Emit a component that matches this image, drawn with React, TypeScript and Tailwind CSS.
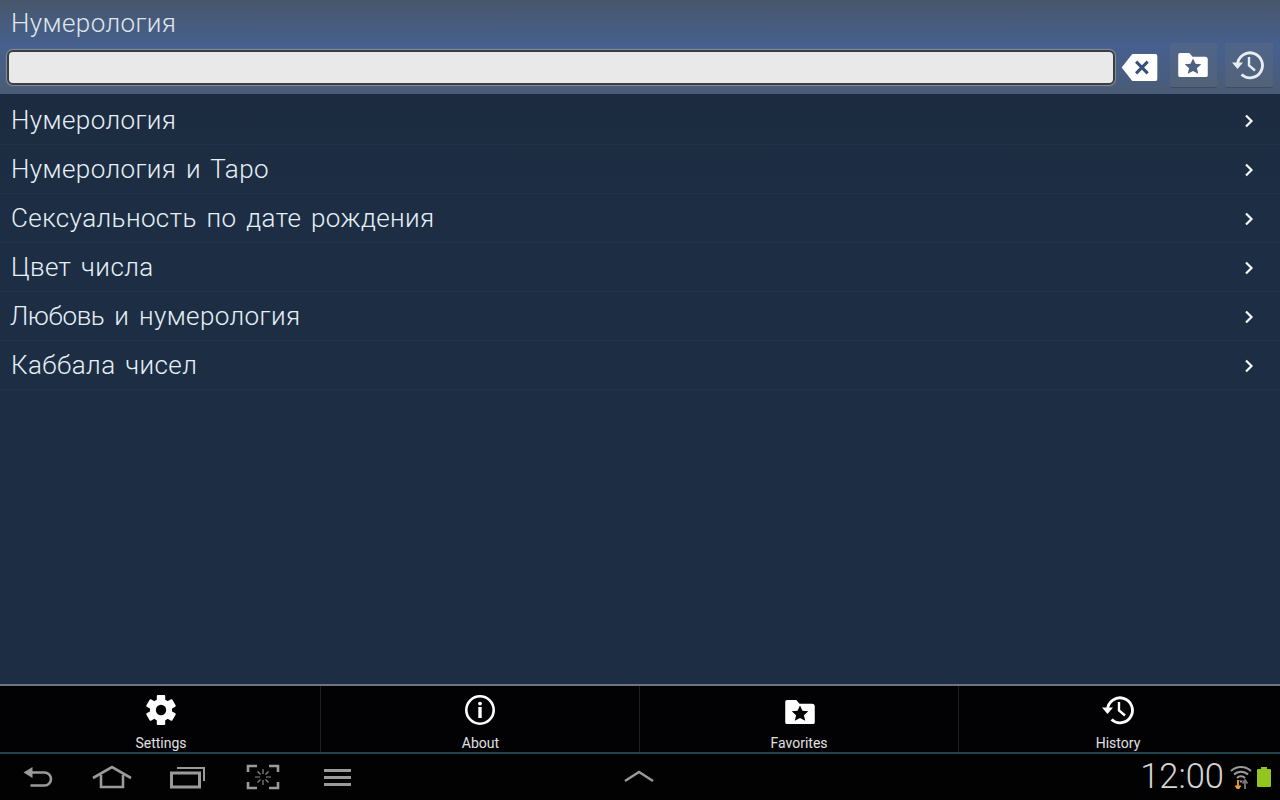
import React from "react";

const FolderStar = ({ star, className }: { star: string; className?: string }) => (
  <svg viewBox="0 0 32 26" className={className}>
    <path d="M2 0h10l3.500 4H29a3 3 0 0 1 3 3v17a2 2 0 0 1-2 2H2a2 2 0 0 1-2-2V2a2 2 0 0 1 2-2z" fill="#fff" />
    <path d="M16 6l2.700 5.700 6.300.6-4.800 4.100 1.500 6.200L16 19.400l-5.700 3.200 1.500-6.200L7 12.300l6.300-.6z" fill={star} />
  </svg>
);

const HistoryIcon = ({ className, color = "#fff" }: { className?: string; color?: string }) => (
  <svg viewBox="0 0 32 32" className={className} fill="none">
    <path d="M5.500 15.500a12.500 12.500 0 1 1 4 10" stroke={color} strokeWidth="2.800" />
    <path d="M0 13.500h11L5.500 20z" fill={color} />
    <path d="M17 8v8.500l6 5" stroke={color} strokeWidth="2.400" />
  </svg>
);

const Row = ({ label }: { label: React.ReactNode }) => (
  <div className="h-[49px] flex items-center justify-between pl-[11px] pr-[26px] border-b border-[#21324a]">
    <span className="text-[26px] text-[#e6f0f6] leading-none tracking-[0.4px] [word-spacing:3px] [font-family:Roboto,sans-serif] font-light">{label}</span>
    <svg viewBox="0 0 10 14" className="w-[10px] h-[14px] mt-[1px]" fill="none">
      <path d="M2 1.500L7.500 7 2 12.500" stroke="#f2f6f8" strokeWidth="2.200" />
    </svg>
  </div>
);

const Tab = ({ label, icon, className }: { label: string; icon: React.ReactNode; className: string }) => (
  <div className={`flex flex-col items-center h-full ${className}`}>
    <div className="h-[32px] mt-[8px] flex items-center justify-center">{icon}</div>
    <span className="mt-[9px] text-[14px] leading-[16px] text-[#e0e0e0] [font-family:Roboto,sans-serif]">{label}</span>
  </div>
);

const items: { key: string; label: React.ReactNode }[] = [
  { key: "a", label: "Нумерология" },
  { key: "b", label: "Нумерология и Таро" },
  { key: "c", label: "Сексуальность по дате рождения" },
  { key: "d", label: "Цвет числа" },
  { key: "e", label: <><span className="-ml-[1px] tracking-[-0.4px]">Любовь</span> и нумерология</> },
  { key: "f", label: "Каббала чисел" },
];

export default function App() {
  return (
    <div className="w-[1280px] h-[800px] flex flex-col overflow-hidden bg-[#1d2e44]">
      <div className="h-[94px] shrink-0 flex flex-col bg-gradient-to-b from-[#47566b] via-[#46608f] to-[#4a5c75]">
        <div className="h-[45px] pl-[11px] pt-[1px] flex items-center">
          <span className="text-[26px] leading-none text-[#dfe7ec] tracking-[0.4px] font-light [font-family:Roboto,sans-serif]">Нумерология</span>
        </div>
        <div className="flex items-start pl-[7px]">
          <div className="w-[1108px] h-[35px] mt-[5px] rounded-[6px] bg-[#e9e9e9] border-2 border-[#3a3f44] shadow-[0_0_1px_1px_#8a8f95]" />
          <svg viewBox="0 0 37 28" className="w-[37px] h-[27px] ml-[6px] mt-[9px]">
            <path d="M11 0h24a2 2 0 0 1 2 2v24a2 2 0 0 1-2 2H11L0 14z" fill="#fff" />
            <path d="M15 8l12 12M27 8L15 20" stroke="#38517a" strokeWidth="3.200" />
          </svg>
          <div className="w-[47px] h-[45px] ml-[12px] -mt-[2px] pr-[2px] flex items-center justify-center bg-gradient-to-b from-[#50658a] to-[#516278] border-b border-[#3e4c60] rounded-[2px]">
            <FolderStar star="#4f6180" className="w-[30px] h-[24px]" />
          </div>
          <div className="w-[48px] h-[45px] ml-[8px] -mt-[2px] pr-[3px] flex items-center justify-center bg-gradient-to-b from-[#50658a] to-[#516278] border-b border-[#3e4c60] rounded-[2px]">
            <HistoryIcon className="w-[32px] h-[32px]" color="#e8edf2" />
          </div>
        </div>
      </div>
      <div className="flex-1 pt-[2px] bg-gradient-to-b from-[#1c2b40] to-[#1d2e44] to-[20%]">
        {items.map((t) => <Row key={t.key} label={t.label} />)}
      </div>
      <div className="h-[2px] shrink-0 bg-[#70757d]" />
      <div className="h-[66px] shrink-0 bg-[#020204] flex">
        <Tab className="w-[321px] border-r border-[#1c2025] pl-[2px]" label="Settings" icon={
          <svg viewBox="0 0 32 32" className="w-[32px] h-[32px] -mt-[1px]">
            {[0, 60, 120, 180, 240, 300].map((a) => (
              <rect key={a} x="11.800" y="1" width="8.400" height="8" rx="1" fill="#fff" transform={`rotate(${a} 16 16)`} />
            ))}
            <circle cx="16" cy="16" r="11" fill="#fff" />
            <circle cx="16" cy="16" r="5.200" fill="#020204" />
          </svg>
        } />
        <Tab className="w-[319px] border-r border-[#1c2025] pl-[1px]" label="About" icon={
          <svg viewBox="0 0 32 32" className="w-[32px] h-[32px] -ml-[1px]" fill="none">
            <circle cx="16" cy="16" r="13.700" stroke="#fff" strokeWidth="2.600" />
            <circle cx="16" cy="9.600" r="1.900" fill="#fff" />
            <rect x="14.300" y="13" width="3.400" height="11" fill="#fff" />
          </svg>
        } />
        <Tab className="w-[319px] border-r border-[#1c2025]" label="Favorites" icon={<FolderStar star="#020204" className="w-[30px] h-[24px] mt-[4px] ml-[2px]" />} />
        <Tab className="flex-1 pr-[3px]" label="History" icon={<HistoryIcon className="w-[32px] h-[32px]" />} />
      </div>
      <div className="h-[48px] shrink-0 bg-[#020203] border-t-2 border-[#1e4350] flex items-center">
        <div className="flex items-center w-full pl-[22px] pr-[9px]">
          <svg viewBox="0 0 32 24" className="w-[33px] h-[24px]" fill="none">
            <path d="M8 7.500h14a6 6 0 0 1 0 13H8" stroke="#9a9a9a" strokeWidth="2.600" />
            <path d="M1 7.500L10 2v11z" fill="#9a9a9a" />
          </svg>
          <svg viewBox="0 0 40 24" className="w-[40px] h-[24px] ml-[37px]" fill="none">
            <path d="M1 13L20 2l19 11" stroke="#9a9a9a" strokeWidth="2.600" />
            <path d="M9 10v12h22V10" stroke="#9a9a9a" strokeWidth="2.600" />
          </svg>
          <svg viewBox="0 0 36 24" className="w-[36px] h-[24px] ml-[38px]" fill="none">
            <rect x="1.500" y="8" width="28" height="14" stroke="#9a9a9a" strokeWidth="3" />
            <path d="M7 3h27v13" stroke="#9a9a9a" strokeWidth="2" />
          </svg>
          <svg viewBox="0 0 34 26" className="w-[34px] h-[26px] ml-[40px]" fill="none">
            <path d="M11 2H2v6M23 2h9v6M2 18v6h9M32 18v6h-9" stroke="#9a9a9a" strokeWidth="2.600" />
            <path d="M17 5v5M17 16v5M9 13h5M20 13h5M11.500 7.500l3 3M22.500 7.500l-3 3M11.500 18.500l3-3M22.500 18.500l-3-3" stroke="#8a8a8a" strokeWidth="1.200" />
          </svg>
          <div className="ml-[44px] w-[27px] flex flex-col gap-[4px]">
            <div className="h-[3px] bg-[#9a9a9a]" />
            <div className="h-[3px] bg-[#9a9a9a]" />
            <div className="h-[3px] bg-[#9a9a9a]" />
          </div>
          <svg viewBox="0 0 30 12" className="w-[30px] h-[12px] ml-[273px] -mt-[3px]" fill="none">
            <path d="M1 11L15 2l14 9" stroke="#9a9a9a" strokeWidth="2.400" />
          </svg>
          <div className="ml-auto flex items-center">
            <span className="text-[34.500px] leading-none -mt-[2px] text-[#d4d4d4] font-light [font-family:Roboto,sans-serif]">12:00</span>
            <svg viewBox="0 0 22 24" className="w-[22px] h-[24px] ml-[6px]" fill="none">
              <path d="M1 6a14.500 14.500 0 0 1 20 0" stroke="#9a9a9a" strokeWidth="2" />
              <path d="M4 9.500a10 10 0 0 1 14 0" stroke="#9a9a9a" strokeWidth="2" />
              <path d="M7 13a5.500 5.500 0 0 1 8 0" stroke="#9a9a9a" strokeWidth="2" />
              <path d="M9 15.500h4L11 18z" fill="#9a9a9a" />
              <path d="M8 15v8M5.500 20.500L8 24l2.500-3.500" stroke="#f0a030" strokeWidth="1.800" />
              <path d="M15 24v-8M12.500 18.500L15 15l2.500 3.500" stroke="#777" strokeWidth="1.800" />
            </svg>
            <div className="ml-[5px] flex flex-col items-center">
              <div className="w-[6px] h-[2px] bg-[#94c41e]" />
              <div className="w-[14px] h-[18px] bg-[#94c41e] rounded-[1px]" />
            </div>
          </div>
        </div>
      </div>
    </div>
  );
}
